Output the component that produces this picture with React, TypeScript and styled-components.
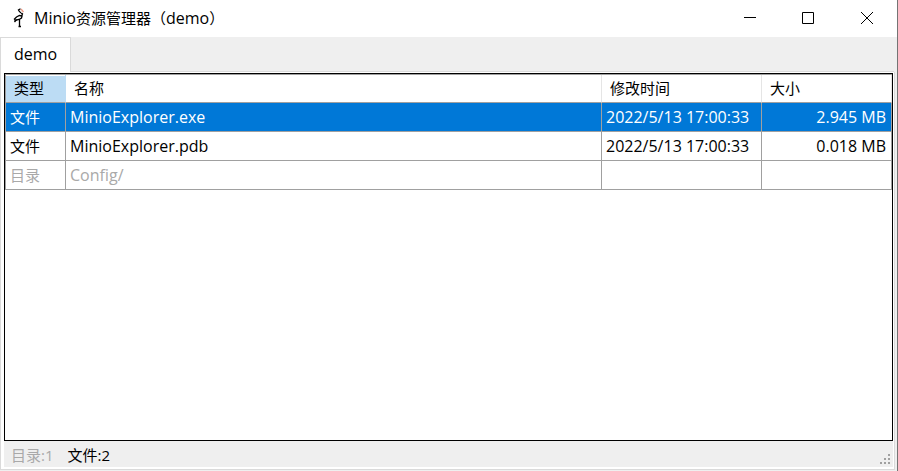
import React, { useState } from "react";
import styled, { createGlobalStyle } from "styled-components";

const GlobalStyle = createGlobalStyle`
  * { box-sizing: border-box; }
  body { margin: 0; }
  button { font: inherit; color: inherit; }
`;

const Window = styled.main`
  display: flex;
  flex-direction: column;
  height: 100vh;
  background: #efefef;
  border-right: 1px solid #747474;
  color: #000;
  font: 15px/20px "Open Sans", "Noto Sans CJK SC", sans-serif;
`;

const TitleBar = styled.header`
  display: flex;
  align-items: center;
  height: 37px;
  padding: 0 0 1px 11px;
  background: #fff;
`;

const Title = styled.h1`
  flex: 1;
  margin: 0 0 0 7px;
  font-size: 15px;
  font-weight: 400;
  white-space: nowrap;
`;

const Latin = styled.span`
  font-size: 16px;
`;

const WindowButtons = styled.div`
  display: flex;
`;

const WindowButton = styled.button`
  display: flex;
  align-items: center;
  justify-content: center;
  width: 58px;
  height: 36px;
  padding: 0;
  border: 0;
  background: transparent;

  &:last-child {
    width: 60px;
  }
`;

const TabStrip = styled.nav`
  display: flex;
  height: 35px;
  margin-right: 3px;
  box-shadow: inset 0 -1px #dadada;
`;

const Tab = styled.button`
  padding: 0 13px 2px;
  border: 1px solid #dadada;
  border-bottom: 0;
  background: #fff;
  font-size: 16px;
`;

const Page = styled.section`
  display: flex;
  flex: 1;
  flex-direction: column;
  min-height: 0;
  margin: 0 2px 1px 0;
  padding: 1px 1px 2px 3px;
  border: 1px solid #dadada;
  border-top: 0;
  background: #fff;
`;

const GridFrame = styled.div`
  flex: 1;
  min-height: 0;
  overflow: auto;
  border: 1px solid #000;
`;

const Grid = styled.table`
  width: 100%;
  table-layout: fixed;
  border-spacing: 0;
  border-top: 1px solid #a0a0a0;
  border-left: 1px solid #a0a0a0;
`;

const Column = styled.col<{ $width?: number }>`
  width: ${({ $width }) => ($width ? `${$width}px` : "auto")};
`;

const HeadCell = styled.th<{ $current?: boolean }>`
  height: 28px;
  padding: 0 8px 2px;
  border-right: 1px solid ${({ $current }) => ($current ? "#bcdcf4" : "#e5e5e5")};
  border-bottom: 1px solid #a0a0a0;
  background: ${({ $current }) => ($current ? "#bcdcf4" : "#fff")};
  box-shadow: inset 0 1px #fff;
  font-weight: 400;
  text-align: left;
`;

const Row = styled.tr<{ $selected: boolean; $muted: boolean }>`
  background: ${({ $selected }) => ($selected ? "#0078d7" : "#fff")};
  color: ${({ $selected, $muted }) => ($selected ? "#fff" : $muted ? "#a9a9a9" : "#000")};
`;

const Cell = styled.td<{ $latin?: boolean; $end?: boolean }>`
  height: 29px;
  padding: 0 5px 0 4px;
  border-right: 1px solid #a0a0a0;
  border-bottom: 1px solid #a0a0a0;
  font-size: ${({ $latin }) => ($latin ? "16px" : "15px")};
  text-align: ${({ $end }) => ($end ? "right" : "left")};
  white-space: nowrap;
`;

const StatusBar = styled.footer`
  display: flex;
  align-items: center;
  gap: 14px;
  height: 26px;
  padding: 2px 2px 0 7px;
  background: #efefef;
`;

const Status = styled.span<{ $muted?: boolean }>`
  color: ${({ $muted }) => ($muted ? "#a9a9a9" : "#000")};
`;

const Grip = styled.svg`
  align-self: flex-end;
  margin: 0 0 2px auto;
`;

const entries = [
  { kind: "文件", name: "MinioExplorer.exe", time: "2022/5/13 17:00:33", size: "2.945 MB" },
  { kind: "文件", name: "MinioExplorer.pdb", time: "2022/5/13 17:00:33", size: "0.018 MB" },
  { kind: "目录", name: "Config/", time: "", size: "" },
];

const gripDots = [[8, 0], [4, 4], [8, 4], [0, 8], [4, 8], [8, 8]];

function Bird() {
  return (
    <svg width="16" height="20" viewBox="0 0 16 20" fill="none" aria-hidden="true">
      <path d="M3 11.5 L5.5 9 L8.5 7.5 L11 8 L10.5 10 L8 11.5 L3.5 12.5" fill="#fff" stroke="#000" strokeWidth="1.3" />
      <path d="M3.5 14 L5.5 11.5" stroke="#000" strokeWidth="1.3" />
      <path d="M10.5 8 L11.5 6 L8.5 3.5 L7.5 2 L9.5 .8" stroke="#000" strokeWidth="1.3" />
      <path d="M9 2.5 L11 5" stroke="#ccc" />
      <path d="M10 1 L12.5 4" stroke="#ef9983" strokeWidth="1.3" />
      <path d="M8.5 11 V18.5 M7.5 18.5 H10" stroke="#000" strokeWidth="1.3" />
    </svg>
  );
}

export default function App() {
  const [selected, setSelected] = useState(0);
  return (
    <Window>
      <GlobalStyle />
      <TitleBar>
        <Bird />
        <Title>
          <Latin>Minio</Latin>资源管理器（<Latin>demo</Latin>）
        </Title>
        <WindowButtons>
          <WindowButton aria-label="最小化">
            <svg width="12" height="12" stroke="#000"><path d="M0 5.5H12" /></svg>
          </WindowButton>
          <WindowButton aria-label="最大化">
            <svg width="12" height="12" stroke="#000" fill="none"><path d="M.5 .5H11.5V11.5H.5Z" /></svg>
          </WindowButton>
          <WindowButton aria-label="关闭">
            <svg width="12" height="12" stroke="#000"><path d="M0 0L12 12M12 0L0 12" /></svg>
          </WindowButton>
        </WindowButtons>
      </TitleBar>
      <TabStrip role="tablist">
        <Tab role="tab" aria-selected="true">demo</Tab>
      </TabStrip>
      <Page>
        <GridFrame>
          <Grid>
            <colgroup>
              <Column $width={60} />
              <Column />
              <Column $width={160} />
              <Column $width={130} />
            </colgroup>
            <thead>
              <tr>
                <HeadCell $current>类型</HeadCell>
                <HeadCell>名称</HeadCell>
                <HeadCell>修改时间</HeadCell>
                <HeadCell>大小</HeadCell>
              </tr>
            </thead>
            <tbody>
              {entries.map((entry, index) => (
                <Row
                  key={entry.name}
                  $selected={index === selected}
                  $muted={entry.kind === "目录"}
                  onClick={() => setSelected(index)}
                >
                  <Cell>{entry.kind}</Cell>
                  <Cell $latin>{entry.name}</Cell>
                  <Cell $latin>{entry.time}</Cell>
                  <Cell $latin $end>{entry.size}</Cell>
                </Row>
              ))}
            </tbody>
          </Grid>
        </GridFrame>
        <StatusBar>
          <Status $muted>目录:1</Status>
          <Status>文件:2</Status>
          <Grip width="11" height="11" fill="#a0a0a0" aria-hidden="true">
            {gripDots.map(([x, y]) => (
              <rect key={`${x}-${y}`} x={x} y={y} width="2" height="2" />
            ))}
          </Grip>
        </StatusBar>
      </Page>
    </Window>
  );
}
